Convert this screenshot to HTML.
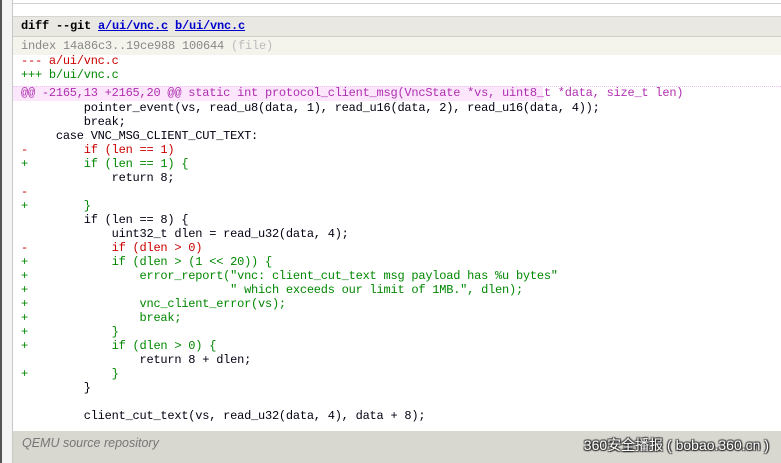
<!DOCTYPE html>
<html><head><meta charset="utf-8"><style>
*{margin:0;padding:0}
body{width:781px;height:463px;overflow:hidden;background:#fff;position:relative;font-family:"Liberation Mono",monospace}
.lb{position:absolute;left:0;top:0;width:2px;height:463px;background:#555}
.lb2{position:absolute;left:2px;top:0;width:10px;height:463px;background:#f4f4f4}
.lb3{position:absolute;left:12px;top:0;width:1px;height:463px;background:#c8c8c8}
.tl{position:absolute;left:13px;top:3px;right:0;height:1px;background:#d0d0d0}
.hdr{position:absolute;left:13px;top:16px;right:0;height:21px;background:#e9e8e3;border-top:1px solid #d6d6d0;border-bottom:1px solid #d0d0c8;box-sizing:border-box;font-weight:bold;font-size:12px;line-height:19px;padding-left:8px;color:#000;letter-spacing:-0.2px}
.hdr a{color:#00c;text-decoration:underline}
.idx{position:absolute;left:13px;top:37px;right:0;height:18px;background:#f4f4ec;font-size:12px;letter-spacing:-0.2px;line-height:19px;padding-left:8px;color:#888}
.idx span{color:#bbb}
pre{position:absolute;left:21px;font-family:"Liberation Mono",monospace;font-size:12px;letter-spacing:-0.23px;line-height:14px;color:#001}
.r{color:#c00}.g{color:#080}
.hunk{position:absolute;left:13px;top:86px;right:0;height:14px;border-top:1px dotted #f0c0f0;background:linear-gradient(to right,#fbe6fb 0,#fbe6fb 530px,#fff 530px)}
.ft{position:absolute;left:13px;top:431px;right:0;height:32px;background:#d8d7d0;font-family:"Liberation Sans",sans-serif}
.ft i{position:absolute;left:9px;top:5px;font-size:12.5px;color:#777}
.wm{position:absolute;right:12px;top:4px;font-family:"Liberation Sans","Noto Sans CJK SC",sans-serif;font-size:14px;color:#fff;text-shadow:1px 1px 1px #222,-1px -1px 1px #444,1px -1px 1px #333,-1px 1px 1px #333}
</style></head><body>
<div class="lb"></div><div class="lb2"></div><div class="lb3"></div><div class="tl"></div>
<div class="hdr">diff --git <a>a/ui/vnc.c</a> <a>b/ui/vnc.c</a></div>
<div class="idx">index 14a86c3..19ce988 100644 <span>(file)</span></div>
<pre style="top:54px"><span class="r">--- a/ui/vnc.c</span>
<span class="g">+++ b/ui/vnc.c</span></pre>
<div class="hunk"></div>
<pre style="top:86px;color:#b030b0">@@ -2165,13 +2165,20 @@ static int protocol_client_msg(VncState *vs, uint8_t *data, size_t len)</pre>
<pre style="top:101px">         pointer_event(vs, read_u8(data, 1), read_u16(data, 2), read_u16(data, 4));
         break;
     case VNC_MSG_CLIENT_CUT_TEXT:
<span class="r">-        if (len == 1)</span>
<span class="g">+        if (len == 1) {</span>
             return 8;
<span class="r">-</span>
<span class="g">+        }</span>
         if (len == 8) {
             uint32_t dlen = read_u32(data, 4);
<span class="r">-            if (dlen &gt; 0)</span>
<span class="g">+            if (dlen &gt; (1 &lt;&lt; 20)) {</span>
<span class="g">+                error_report("vnc: client_cut_text msg payload has %u bytes"</span>
<span class="g">+                             " which exceeds our limit of 1MB.", dlen);</span>
<span class="g">+                vnc_client_error(vs);</span>
<span class="g">+                break;</span>
<span class="g">+            }</span>
<span class="g">+            if (dlen &gt; 0) {</span>
                 return 8 + dlen;
<span class="g">+            }</span>
         }

         client_cut_text(vs, read_u32(data, 4), data + 8);</pre>
<div class="ft"><i>QEMU source repository</i><div class="wm">360安全播报 ( bobao.360.cn )</div></div>
</body></html>
